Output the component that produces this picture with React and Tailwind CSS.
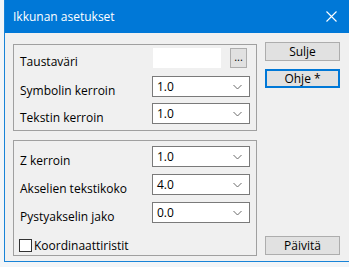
import React from "react";

const font = { fontFamily: '"Open Sans", "Noto Sans", sans-serif' };

function Chevron() {
  return (
    <svg width="9" height="6" viewBox="0 0 9 6" className="shrink-0">
      <path d="M0.5 1 L4.5 5 L8.5 1" fill="none" stroke="#6a6a6a" strokeWidth="1" />
    </svg>
  );
}

function Combo({ value }) {
  return (
    <div className="w-[98px] h-[21px] bg-white border border-[#7a7a7a] flex items-center justify-between pl-[4px] pr-[7px] text-[12px] leading-[16px] text-black">
      <span>{value}</span>
      <Chevron />
    </div>
  );
}

function Row({ label, value, className = "" }) {
  return (
    <div className={"h-[21px] flex items-center justify-between pl-[6px] pr-[6px] " + className}>
      <span className="pt-[8px] text-[12px] leading-[16px] text-black">{label}</span>
      <Combo value={value} />
    </div>
  );
}

function Btn({ children, focused, className = "" }) {
  return (
    <div
      className={
        "w-[75px] h-[19px] flex items-center justify-center text-[12px] leading-[16px] text-black bg-[#e1e1e1] " +
        (focused ? "border-2 border-[#0078d7] " : "border border-[#adadad] ") +
        className
      }
    >
      {children}
    </div>
  );
}

export default function App() {
  return (
    <div className="w-[349px] h-[267px] bg-[#f2f5f8] overflow-hidden" style={font}>
      <div className="ml-[4px] w-[345px] h-[262px] border-l border-b border-[#1883d7] flex flex-col">
        <div className="h-[33px] shrink-0 bg-[#0078d7] flex items-center justify-between pl-[8px] pr-[12px] text-white text-[12px] leading-[16px]">
          <span>Ikkunan asetukset</span>
          <svg width="11" height="11" viewBox="0 0 11 11">
            <path d="M0.5 0.5 L10.5 10.5 M10.5 0.5 L0.5 10.5" stroke="#fff" strokeWidth="1.1" />
          </svg>
        </div>
        <div className="flex-1 bg-[#f0f0f0] flex pl-[8px]">
          <div className="w-[244px] pt-[11px] flex flex-col gap-[9px]">
            <div className="h-[87px] border border-[#a0a0a0] flex flex-col pt-[3px]">
              <div className="h-[20px] flex items-center pl-[6px] pr-[9px]">
                <span className="pt-[8px] text-[12px] leading-[16px] text-black flex-1">Taustaväri</span>
                <div className="w-[68px] h-[20px] bg-white" />
                <div className="ml-[9px] w-[17px] h-[20px] bg-[#e1e1e1] border border-[#adadad] flex items-center justify-center text-[11px] leading-none text-black pb-[3px]">
                  ...
                </div>
              </div>
              <Row label="Symbolin kerroin" value="1.0" className="mt-[8px]" />
              <Row label="Tekstin kerroin" value="1.0" className="mt-[6px]" />
            </div>
            <div className="h-[116px] border border-[#a0a0a0] flex flex-col pt-[5px]">
              <Row label="Z kerroin" value="1.0" />
              <Row label="Akselien tekstikoko" value="4.0" className="mt-[7px]" />
              <Row label="Pystyakselin jako" value="0.0" className="mt-[7px]" />
              <div className="h-[13px] flex items-center pl-[5px] mt-[16px]">
                <div className="w-[13px] h-[13px] bg-white border border-[#333333]" />
                <span className="ml-[2px] text-[12px] leading-[16px] text-black">Koordinaattiristit</span>
              </div>
            </div>
          </div>
          <div className="ml-[8px] pt-[9px] pb-[6px] flex flex-col">
            <Btn>Sulje</Btn>
            <Btn focused className="mt-[8px]">Ohje *</Btn>
            <div className="flex-1" />
            <Btn>Päivitä</Btn>
          </div>
        </div>
      </div>
    </div>
  );
}
